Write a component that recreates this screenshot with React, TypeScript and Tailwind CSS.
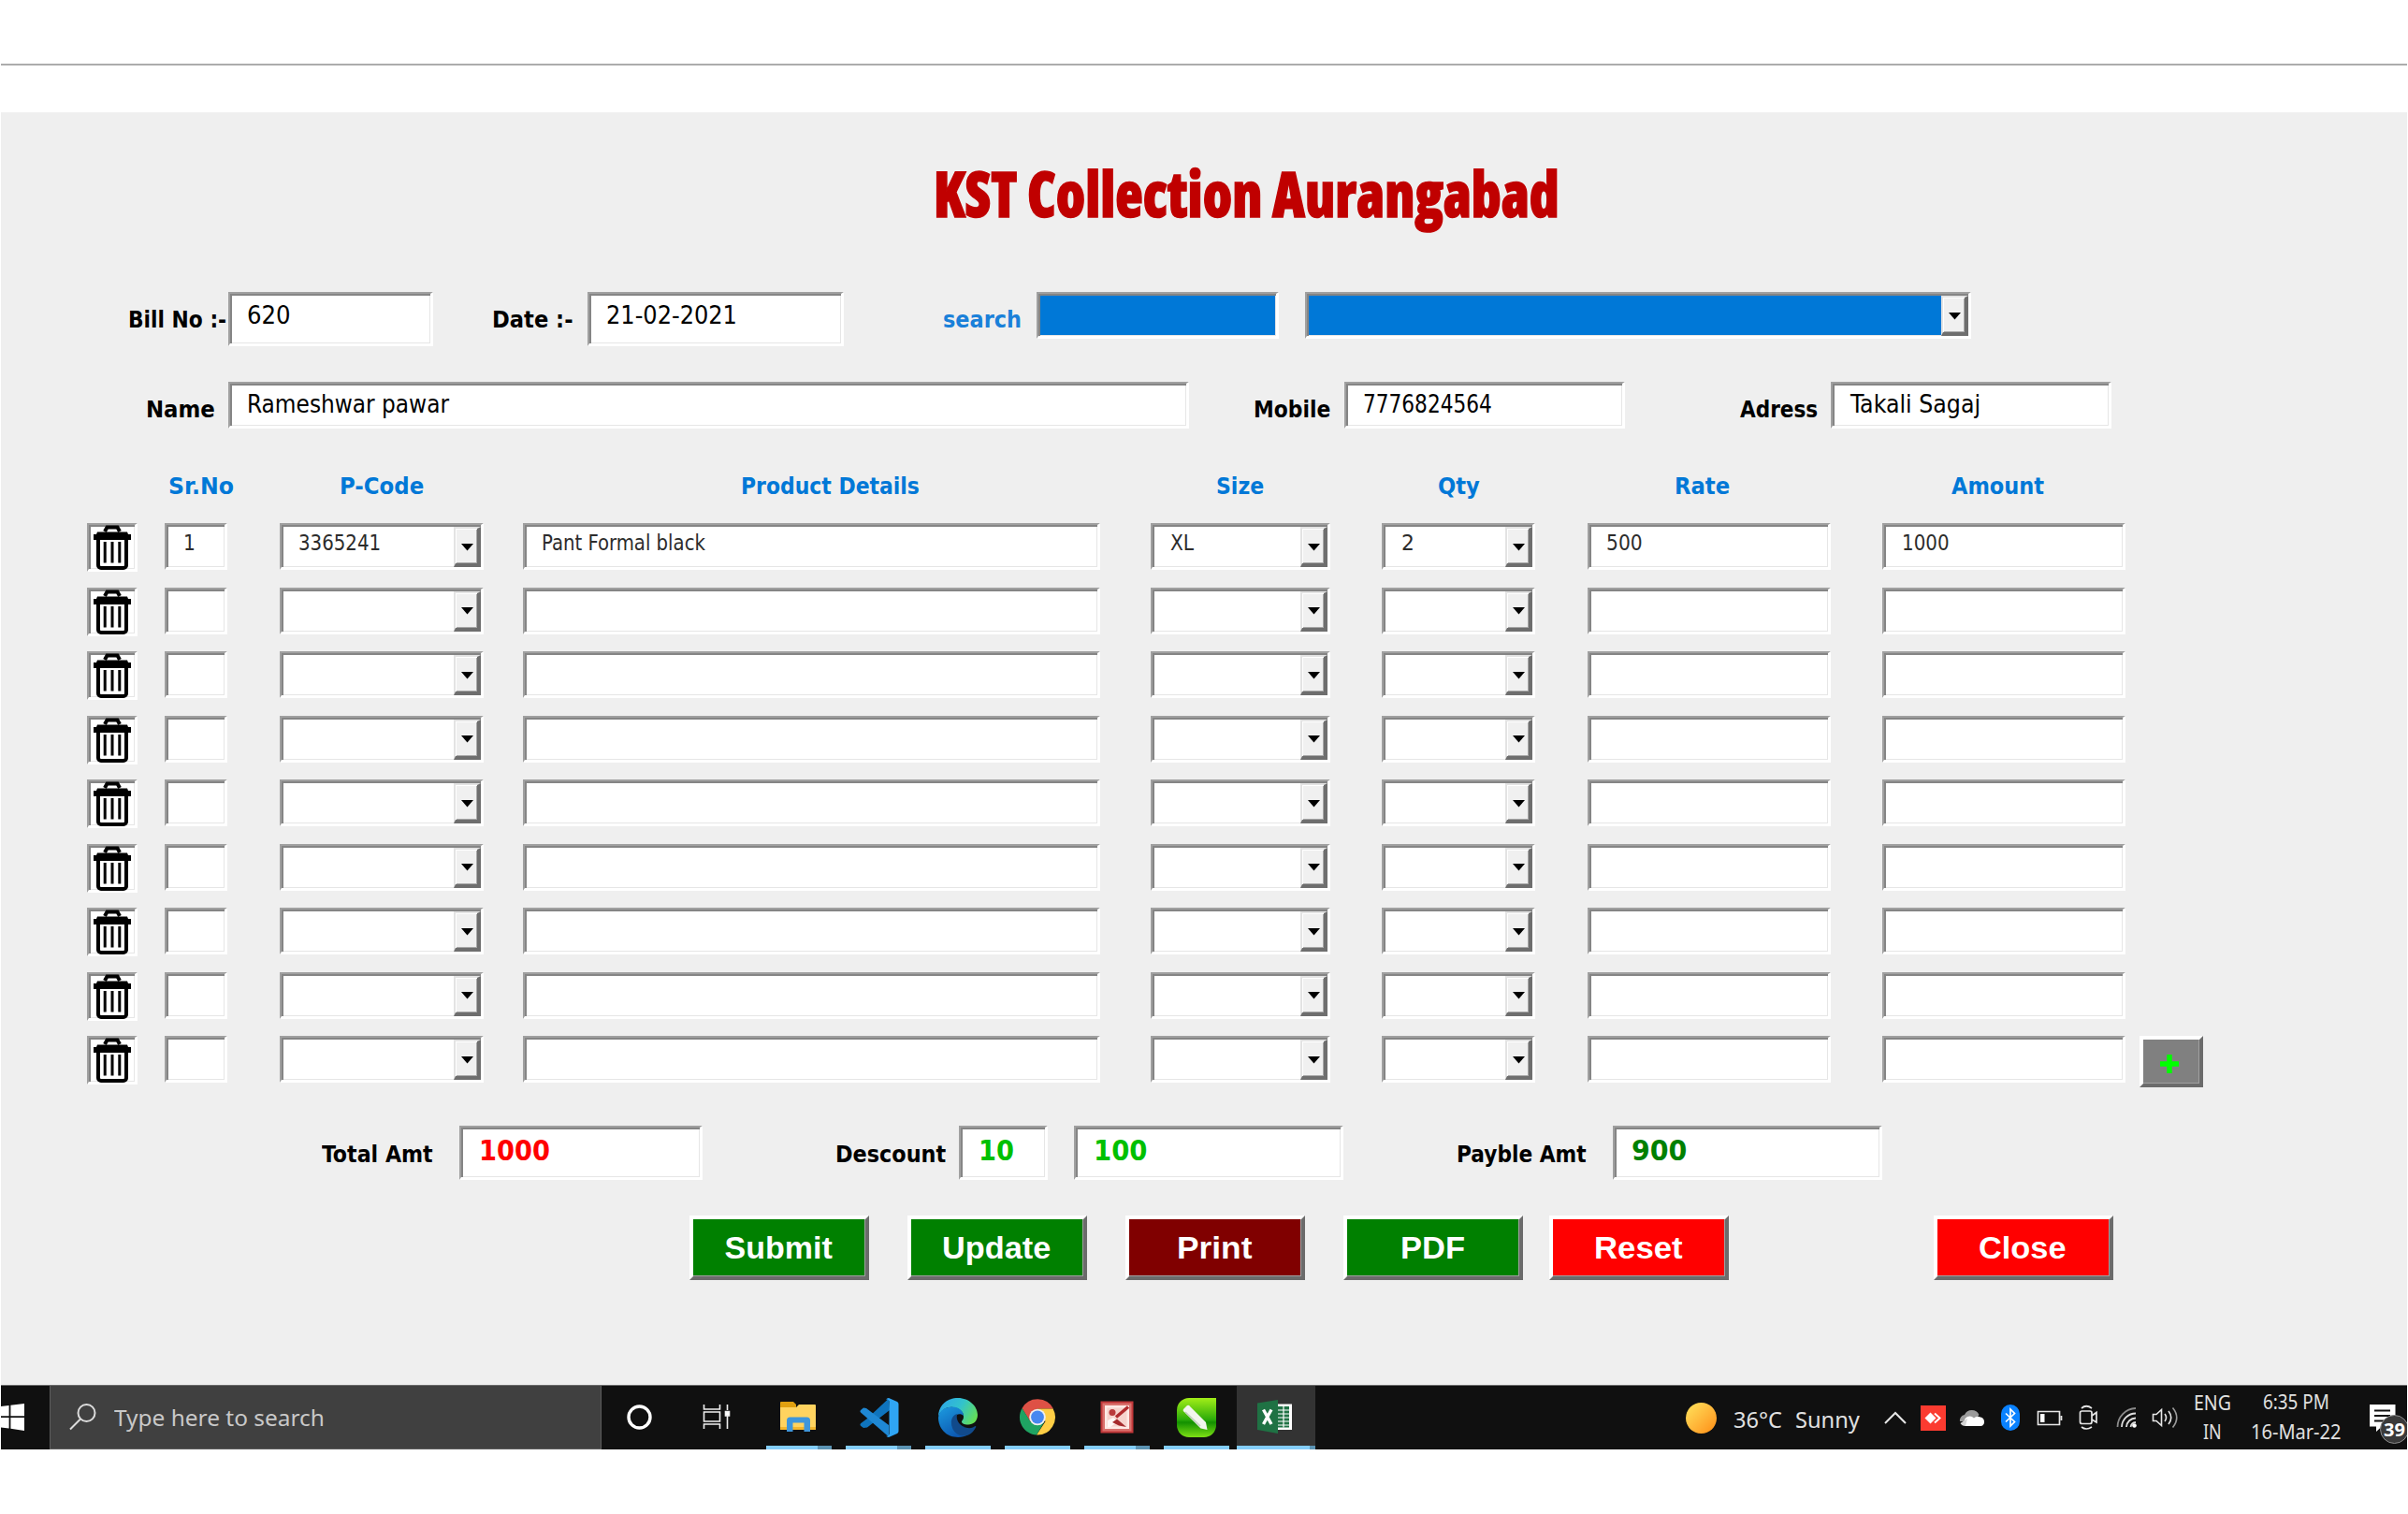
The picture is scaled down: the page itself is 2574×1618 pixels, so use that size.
import { useLayoutEffect, useRef, useState, type ReactNode } from "react";

/** Single line of text stretched horizontally to fill the width of its box. */
function Fit({ className, children }: { className: string; children: string }) {
  const box = useRef<HTMLDivElement>(null);
  const text = useRef<HTMLSpanElement>(null);
  const [scale, setScale] = useState(1);
  useLayoutEffect(() => {
    if (box.current && text.current) {
      setScale(box.current.clientWidth / text.current.offsetWidth);
    }
  }, [children]);
  return (
    <div ref={box} className={`shrink-0 whitespace-nowrap ${className}`}>
      <span ref={text} className="inline-block origin-left" style={{ transform: `scaleX(${scale})` }}>
        {children}
      </span>
    </div>
  );
}

const sunken =
  "shrink-0 border-t-2 border-l-2 border-r-[3px] border-b-[3px] border-t-[#a0a0a0] border-l-[#a0a0a0] border-r-white border-b-white shadow-[inset_2px_2px_0_#858585,inset_-1px_-1px_0_#e6e6e6]";

function Field({ className, children }: { className: string; children?: ReactNode }) {
  return <div className={`${sunken} ${className}`}>{children}</div>;
}

function DropButton() {
  return (
    <div className="flex w-[29px] shrink-0 items-center justify-center border-t-2 border-l-2 border-r-4 border-b-4 border-t-[#e3e3e3] border-l-[#e3e3e3] border-r-[#6e6e6e] border-b-[#6e6e6e] bg-[#f0f0f0] shadow-[inset_1px_1px_0_#fff,inset_-1px_-1px_0_#a8a8a8]">
      <svg viewBox="0 0 13 8" className="mt-0.5 ml-0.5 h-2 w-[13px]">
        <path d="M0 0h13L6.5 7.5z" fill="#000" />
      </svg>
    </div>
  );
}

function Combo({ className, children }: { className: string; children?: ReactNode }) {
  return (
    <div className={`${sunken} flex pt-0.5 ${className}`}>
      <div className="flex-1">{children}</div>
      <DropButton />
    </div>
  );
}

function TrashIcon() {
  return (
    <svg viewBox="0 0 40 48" className="h-12 w-10">
      <path d="M12 7l2.5-4.500h11L28 7" fill="none" stroke="#000" strokeWidth="4" />
      <path d="M4 7.5h32l1 2.500h3v6H0v-6h3z" fill="#000" />
      <path d="M5 14v29a3 3 0 0 0 3 3h24a3 3 0 0 0 3-3V14" fill="none" stroke="#000" strokeWidth="4" />
      <path d="M12.2 18v22.500M20 18v22.500M27.8 18v22.500" stroke="#000" strokeWidth="3" />
    </svg>
  );
}

const label = "text-[24px] font-bold text-black";
const heading = "text-[24px] font-bold leading-[33px] text-[#0078d7]";
const cell = "text-[22.5px] leading-[38px] text-[#2c2c2c]";
const columns = "grid grid-cols-[83px_123px_260px_671px_247px_220px_315px_275px_68px]";

type Line = { no: ReactNode; code: ReactNode; product: ReactNode; size: ReactNode; qty: ReactNode; rate: ReactNode; amount: ReactNode };

const firstLine: Line = {
  no: <Fit className={`ml-[18px] w-[13px] ${cell}`}>1</Fit>,
  code: <Fit className={`-mt-0.5 ml-[18px] w-[88px] ${cell}`}>3365241</Fit>,
  product: <Fit className={`ml-[18px] w-[175px] ${cell}`}>Pant Formal black</Fit>,
  size: <Fit className={`-mt-0.5 ml-[19px] w-[25px] ${cell}`}>XL</Fit>,
  qty: <Fit className={`-mt-0.5 ml-[19px] w-[14px] ${cell}`}>2</Fit>,
  rate: <Fit className={`ml-[18px] w-[39px] ${cell}`}>500</Fit>,
  amount: <Fit className={`ml-[19px] w-[51px] ${cell}`}>1000</Fit>,
};

function LineRow({ line, last }: { line?: Line; last: boolean }) {
  return (
    <div className={`${columns} h-[68.54px] pl-[92px]`}>
      <Field className="h-[52px] w-[54px] bg-white pl-[5px]">
        <TrashIcon />
      </Field>
      <Field className="h-[50px] w-[67px] bg-white">{line?.no}</Field>
      <Combo className="h-[50px] w-[218px] bg-white">{line?.code}</Combo>
      <Field className="h-[50px] w-[617px] bg-white">{line?.product}</Field>
      <Combo className="h-[50px] w-[192px] bg-white">{line?.size}</Combo>
      <Combo className="h-[50px] w-[164px] bg-white">{line?.qty}</Combo>
      <Field className="h-[50px] w-[260px] bg-white">{line?.rate}</Field>
      <Field className="h-[50px] w-[260px] bg-white">{line?.amount}</Field>
      {last && (
        <div className="flex h-[55px] w-[68px] items-center justify-center border-4 border-t-white border-r-[#6b6b6b] border-b-[#6b6b6b] border-l-white bg-[#808080] shadow-[inset_-1px_-1px_0_#a0a0a0]">
          <svg viewBox="0 0 20 20" className="mt-1 mr-1 size-5">
            <path d="M10 0v20M0 10h20" stroke="#00ff00" strokeWidth="5.5" />
          </svg>
        </div>
      )}
    </div>
  );
}

function ActionButton({ className, text, children }: { className: string; text: string; children: string }) {
  return (
    <div
      className={`flex h-[69px] w-[192px] shrink-0 items-center justify-center border-4 border-t-white border-r-[#6b6b6b] border-b-[#6b6b6b] border-l-white pr-0.5 font-['Liberation_Sans',sans-serif] text-[34px] font-bold text-white shadow-[inset_-1px_-1px_0_#a0a0a0] ${className}`}
    >
      <Fit className={text}>{children}</Fit>
    </div>
  );
}

function TaskItem({ split, children }: { split?: boolean; children: ReactNode }) {
  return (
    <div className="flex w-[70px] shrink-0 flex-col">
      <div className="flex flex-1 justify-center pt-[13px]">{children}</div>
      <div className="flex h-1">
        <div className="flex-1 bg-[#83cdf9]" />
        {split && <div className="w-[15px] bg-[#5c94b4]" />}
      </div>
    </div>
  );
}

function Taskbar() {
  return (
    <div className="flex h-[69px] overflow-hidden border-t border-[#6a6a6a] bg-[#101010] font-['Noto_Sans',sans-serif] text-[#e0e0e0]">
      <svg viewBox="0 0 52 68" className="w-[52px] shrink-0">
        <path d="M0 22l8.600-1v11.200H0zM10.400 20.700L25 19v13.200H10.400zM0 34h8.600v11.500L0 44.500zM10.400 34H25v14L10.400 45.800z" fill="#fff" />
      </svg>
      <div className="flex w-[590px] shrink-0 items-center border-x border-b border-[#5c5c5c] bg-[#404040]">
        <svg viewBox="0 0 30 30" className="ml-5 h-[30px] w-[30px] -translate-y-px" fill="none" stroke="#dcdcdc" strokeWidth="2">
          <circle cx="18.5" cy="11" r="9" />
          <path d="M12 17.5L1 28.5" />
        </svg>
        <Fit className="ml-[18px] w-[225px] text-[24px] text-[#c8c8c8]">Type here to search</Fit>
      </div>
      <svg viewBox="0 0 30 68" className="ml-[26px] w-[30px] shrink-0">
        <circle cx="14.5" cy="33.5" r="11.500" fill="none" stroke="#fff" strokeWidth="3.400" />
      </svg>
      <svg viewBox="0 0 30 68" className="ml-[52px] w-[30px] shrink-0" fill="none" stroke="#f0f0f0" strokeWidth="1.600">
        <path d="M1.500 20v5h17v-5M1.500 46v-5h17v5M1.500 28h17v10h-17zM26.500 20v6M26.500 32v14" />
        <path d="M24.500 27.500h4V32h-4z" fill="#fff" />
      </svg>

      <div className="ml-[38px] flex gap-[15px]">
        <TaskItem split>
          <svg viewBox="0 0 40 42" className="mr-[3px] h-[42px] w-10">
            <path d="M1 5a1 1 0 0 1 1-1h13l3 3v6H1z" fill="#e0a010" />
            <path d="M1 10h17l3-3h17a1 1 0 0 1 1 1v26H1z" fill="#ffd35f" />
            <path d="M1 31h38v3H1z" fill="#f3b62c" />
            <path d="M8 36V24a3.500 3.500 0 0 1 3.500-3.500h18A3.500 3.500 0 0 1 33 24v12h-6.500v-9.500h-12V36z" fill="#3e96db" />
          </svg>
        </TaskItem>
        <TaskItem split>
          <svg viewBox="0 0 42 42" className="ml-px size-[42px]">
            <path d="M31 .5L8 22 1.300 27a2 2 0 0 0 0 3L4 32l4-.5L32 13z" fill="#0f74bd" />
            <path d="M4 10.500L1.300 12.700a2 2 0 0 0 0 3L31 41.500V29L7 11z" fill="#1f88d4" />
            <path d="M31 0l9 4a3 3 0 0 1 1.500 2.500v29A3 3 0 0 1 40 38l-9 4q-2-.2-3-1.500 3 1 3.500-2V3.500Q31 1 28 1.500 29 0 31 0z" fill="#2fa5f4" />
          </svg>
        </TaskItem>
        <TaskItem>
          <svg viewBox="0 0 42 42" className="size-[42px]">
            <defs>
              <linearGradient id="edgeTop" x1="0" y1="0.3" x2="1" y2="0.7">
                <stop offset="0" stopColor="#2da8e8" />
                <stop offset="0.5" stopColor="#33c3cb" />
                <stop offset="1" stopColor="#66e052" />
              </linearGradient>
              <linearGradient id="edgeLow" x1="0" y1="0" x2="0.6" y2="1">
                <stop offset="0" stopColor="#1c9be0" />
                <stop offset="1" stopColor="#0c57b0" />
              </linearGradient>
            </defs>
            <path d="M0 20C0 8 9 0 21 0s21 9 21 18c0 7-5 10.500-10 10.500-5 0-7-1.500-7-3 0-1.500 2-2 2-5.500C27 14 22 11 16 10 8 9 2 14 0 20z" fill="url(#edgeTop)" />
            <path d="M0 21C1 13 8 9.500 15 9.500c7 0 12 5 12 9.500-3-3-9-2-10 3-1.500 8 5 19 15 17-3 2-7 3-11 3C9 42 0 33 0 21z" fill="url(#edgeLow)" />
            <path d="M14 24c1-4 3-6.500 6.500-7-2 3-.5 13 10.500 15 4 .7 7-1 8.500-2 1 0 1 .5.500 1.500C37 37 33 40 28 40.500 19 41 13 33 14 24z" fill="#114a8b" />
          </svg>
        </TaskItem>
        <TaskItem>
          <svg viewBox="0 0 42 42" className="size-[42px]">
            <path d="M4.500 11A19 19 0 0 1 38 11.500H21L13 25z" fill="#de5145" />
            <path d="M37.600 11.500A19 19 0 0 1 20 39.500L29.500 25 21 11.500z" fill="#ffce45" />
            <path d="M4.500 11A19 19 0 0 0 20 39.500L28 26H14z" fill="#1fa362" />
            <circle cx="21" cy="20.500" r="8.800" fill="#eee" />
            <circle cx="21" cy="20.500" r="6.900" fill="#4687f0" />
          </svg>
        </TaskItem>
        <TaskItem split>
          <svg viewBox="0 0 42 42" className="size-[42px]">
            <path d="M3.500 3.500h35v34h-35z" fill="#c2383a" />
            <path d="M5.500 5.500h31v30h-31z" fill="#d9716d" />
            <path d="M8 8h26v25H8z" fill="#fdeae6" />
            <path d="M10.500 10.500h21v20h-21z" fill="#f6d3cd" />
            <path d="M11 24l6-3 5 4-8 6h-3z" fill="#fff8f6" />
            <path d="M33 9.500L20 20.500" stroke="#b02a2d" strokeWidth="3.500" />
            <circle cx="16" cy="15.500" r="3.500" fill="#b9393a" />
            <path d="M16 26l5-3.500 10 8.500-8-1.500z" fill="#a52a2c" />
          </svg>
        </TaskItem>
        <TaskItem>
          <svg viewBox="0 0 42 42" className="size-[42px]">
            <defs>
              <linearGradient id="penTile" x1="0" y1="0" x2="0" y2="1">
                <stop offset="0" stopColor="#a2ee18" />
                <stop offset="0.55" stopColor="#2cab0a" />
                <stop offset="0.62" stopColor="#129000" />
                <stop offset="1" stopColor="#7ee015" />
              </linearGradient>
            </defs>
            <path d="M0 13A13 13 0 0 1 13 0h29v29a13 13 0 0 1-13 13H13A13 13 0 0 1 0 29z" fill="url(#penTile)" />
            <path d="M7 12l4-4q2-1 3 1l17 17 1.500 8-7-1.500L8 15q-2-1-1-3z" fill="#f2f5ee" />
            <path d="M9 15l16 15" stroke="#c4cec0" strokeWidth="1.5" />
          </svg>
        </TaskItem>
      </div>

      <div className="ml-2 flex w-[84px] shrink-0 flex-col bg-[#333]">
        <div className="flex flex-1 pl-5">
          <svg viewBox="0 0 42 64" className="w-[42px]">
            <path d="M22 19.500h17V47H22z" fill="#fff" />
            <path d="M24 22h12v22.500H24z" fill="#217346" />
            <path d="M24 26h12M24 30h12M24 34h12M24 38h12M24 42h12M30 22v22.500" stroke="#fff" strokeWidth="1.200" />
            <path d="M2 18.500L24 15v36L2 47z" fill="#1f7244" />
            <path d="M8.500 25.500L17 41M17 25.500L8.500 41" stroke="#fff" strokeWidth="3.400" />
          </svg>
        </div>
        <div className="flex h-1">
          <div className="flex-1 bg-[#83cdf9]" />
          <div className="w-1.5 bg-[#5c94b4]" />
        </div>
      </div>

      <div className="ml-[396px] flex shrink-0 items-center">
        <div className="size-[33px] rounded-full bg-linear-to-br from-[#ffe45c] to-[#ff8c0a]" />
        <Fit className="ml-[18px] w-[52px] pt-1 text-[24px]">36°C</Fit>
        <Fit className="ml-[14px] w-[69px] pt-1 text-[24px]">Sunny</Fit>
      </div>
      <div className="ml-[26px] flex shrink-0 items-center">
        <svg viewBox="0 0 24 14" className="h-3.5 w-6">
          <path d="M1 13L12 2l11 11" fill="none" stroke="#e6e6e6" strokeWidth="2" />
        </svg>
        <svg viewBox="0 0 27 27" className="ml-[15px] size-[27px]">
          <path d="M0 0h27v27H0z" fill="#fb3b30" />
          <path d="M10.500 7.500l6 6-6 6-6-6z" fill="#fff" />
          <path d="M15 8.500l5.500 5-5.500 5" fill="none" stroke="#fff" strokeWidth="2" />
        </svg>
        <svg viewBox="0 0 28 20" className="ml-3.5 h-5 w-7">
          <path d="M1 14a6 6 0 0 1 5-7 8.500 8.500 0 0 1 15.500 0L16 14z" fill="#9b9b9b" />
          <path d="M7 19a6.500 6.500 0 0 1 2-10q4-1.500 7 1.500 3-3 7-1a5 5 0 0 1 1 9.500z" fill="#fff" />
          <path d="M7 19a6 6 0 0 1-5.500-3L9 11z" fill="#d6d6d6" />
        </svg>
        <svg viewBox="0 0 20 28" className="ml-[17px] h-7 w-5">
          <rect width="20" height="28" rx="10" fill="#0a82ff" />
          <path d="M5 9.500l9.500 9L10 23V5l4.500 4.500-9.500 9" fill="none" stroke="#fff" strokeWidth="1.700" />
        </svg>
        <svg viewBox="0 0 28 18" className="mt-0.5 ml-[18px] h-[18px] w-7">
          <path d="M1.500 1.500h23v14h-23zM26.500 6v5" fill="none" stroke="#e6e6e6" strokeWidth="1.700" />
          <path d="M4 4h4.500v9H4z" fill="#fff" />
        </svg>
        <svg viewBox="0 0 22 28" className="ml-[17px] h-7 w-[22px]" fill="none" stroke="#e6e6e6" strokeWidth="1.700">
          <rect x="1.500" y="7" width="12.500" height="13.500" rx="2" />
          <path d="M14 12l5-3.500v10.500L14 16M3 4q5-4.500 11 0M3 24q5 4 11 0" />
        </svg>
        <svg viewBox="0 0 23 24" className="ml-[18px] h-6 w-[23px]" fill="none">
          <path d="M1.500 22A20 20 0 0 1 21 2" stroke="#8a8a8a" strokeWidth="1.800" />
          <path d="M6 22A15 15 0 0 1 21 7.500M11 22a10 10 0 0 1 10-9.500M15.500 22a6 6 0 0 1 5.500-5" stroke="#dedede" strokeWidth="1.800" />
          <circle cx="19.500" cy="20.500" r="2.300" fill="#fff" />
        </svg>
        <svg viewBox="0 0 30 24" className="ml-[15px] h-6 w-[30px]" fill="none" stroke="#e6e6e6" strokeWidth="1.600">
          <path d="M1.500 8.500v7h3.500l5.500 5V3.500L5 8.500z" />
          <path d="M14 8q3 4 0 8M18 5q5.500 7 0 14" />
          <path d="M22.500 1.500q8.500 10.500 0 21" stroke="#9a9a9a" />
        </svg>
      </div>
      <div className="ml-[15px] flex shrink-0 flex-col items-center pt-0.5 text-[21.5px] leading-[31px]">
        <Fit className="w-10">ENG</Fit>
        <Fit className="w-5">IN</Fit>
      </div>
      <div className="ml-[21px] flex shrink-0 flex-col items-center pt-px text-[21.5px] leading-[31.5px]">
        <Fit className="w-[71px]">6:35 PM</Fit>
        <Fit className="w-[96px]">16-Mar-22</Fit>
      </div>
      <div className="relative ml-[31px] w-[40px] shrink-0 pt-5">
        <svg viewBox="0 0 28 30" className="h-[30px] w-7">
          <path d="M0 0h27.500v23.500H13L7 29v-5.500H0z" fill="#fff" />
          <path d="M5 6.500h17M5 12h17M5 17.500h12" stroke="#101010" strokeWidth="2" />
        </svg>
        <div className="absolute top-[31px] left-[11px] flex size-[31px] items-center justify-center rounded-full border-[1.5px] border-[#8b8b8b] bg-[#3a3a3a] text-[20px] font-bold text-white">
          <Fit className="w-[23px] leading-none">39</Fit>
        </div>
      </div>
    </div>
  );
}

export default function App() {
  return (
    <div className="flex h-[1618px] w-[2574px] flex-col overflow-hidden bg-white px-px font-['DejaVu_Sans_Condensed','DejaVu_Sans',sans-serif] text-black">
      <div className="mb-[50px] h-[70px] shrink-0 border-b-2 border-[#acacac]" />

      <main className="h-[1360px] shrink-0 bg-[#efefef]">
        <h1 className="flex h-48 pl-[997px] font-['Open_Sans','Noto_Sans',sans-serif] text-[67px] leading-[173px] font-extrabold text-[#c00000] [font-stretch:75%] [-webkit-text-stroke:1.5px_#c00000]">
          <Fit className="w-[669px]">KST Collection Aurangabad</Fit>
        </h1>

        <div className="flex h-24 items-start pl-[136px]">
          <Fit className={`w-[105px] leading-[60px] ${label}`}>Bill No :-</Fit>
          <Field className="ml-0.5 h-[58px] w-[219px] bg-white">
            <Fit className="ml-[18px] w-[47px] text-[26px] leading-[46px]">620</Fit>
          </Field>
          <Fit className={`ml-[63px] w-[87px] leading-[60px] ${label}`}>Date :-</Fit>
          <Field className="ml-[15px] h-[58px] w-[274px] bg-white">
            <Fit className="ml-[18px] w-[140px] text-[26px] leading-[46px]">21-02-2021</Fit>
          </Field>
          <Fit className="ml-[106px] w-[84px] text-[24px] leading-[60px] font-bold text-[#1a80d9]">search</Fit>
          <Field className="ml-4 h-[50px] w-[259px] bg-[#0078d7]" />
          <Combo className="ml-7 h-[50px] w-[712px] bg-[#0078d7]" />
        </div>

        <div className="flex h-24 items-start pl-[155px]">
          <Fit className={`w-[74px] leading-[61px] ${label}`}>Name</Fit>
          <Field className="ml-3.5 h-[50px] w-[1027px] bg-white">
            <Fit className="ml-[18px] w-[216px] text-[26px] leading-[44px]">Rameshwar pawar</Fit>
          </Field>
          <Fit className={`ml-[69px] w-[82px] leading-[61px] ${label}`}>Mobile</Fit>
          <Field className="ml-[15px] h-[50px] w-[300px] bg-white">
            <Fit className="ml-[18px] w-[138px] text-[26px] leading-[44px]">7776824564</Fit>
          </Field>
          <Fit className={`ml-[123px] w-[83px] leading-[61px] ${label}`}>Adress</Fit>
          <Field className="ml-3.5 h-[50px] w-[300px] bg-white">
            <Fit className="ml-[19px] w-[139px] text-[26px] leading-[44px]">Takali Sagaj</Fit>
          </Field>
        </div>

        <div className="flex h-[55px] pl-[179px]">
          <Fit className={`w-[70px] ${heading}`}>Sr.No</Fit>
          <Fit className={`ml-[113px] w-[90px] ${heading}`}>P-Code</Fit>
          <Fit className={`ml-[339px] w-[191px] ${heading}`}>Product Details</Fit>
          <Fit className={`ml-[317px] w-[51px] ${heading}`}>Size</Fit>
          <Fit className={`ml-[186px] w-[45px] ${heading}`}>Qty</Fit>
          <Fit className={`ml-[208px] w-[59px] ${heading}`}>Rate</Fit>
          <Fit className={`ml-[237px] w-[99px] ${heading}`}>Amount</Fit>
        </div>

        {Array.from({ length: 9 }, (_, i) => (
          <LineRow key={i} line={i === 0 ? firstLine : undefined} last={i === 8} />
        ))}

        <div className="mt-[27px] flex h-24 items-start pl-[343px]">
          <Fit className={`w-[119px] leading-[62px] ${label}`}>Total Amt</Fit>
          <Field className="ml-7 h-[58px] w-[260px] bg-white">
            <Fit className="ml-[19px] w-[76px] text-[29.5px] leading-[50px] font-bold text-[#ff0000]">1000</Fit>
          </Field>
          <Fit className={`ml-[142px] w-[118px] leading-[62px] ${label}`}>Descount</Fit>
          <Field className="ml-3.5 h-[58px] w-[95px] bg-white">
            <Fit className="ml-[19px] w-[38px] text-[29.5px] leading-[50px] font-bold text-[#00c000]">10</Fit>
          </Field>
          <Field className="ml-7 h-[58px] w-[288px] bg-white">
            <Fit className="ml-[19px] w-[57px] text-[29.5px] leading-[50px] font-bold text-[#00c000]">100</Fit>
          </Field>
          <Fit className={`ml-[121px] w-[139px] leading-[62px] ${label}`}>Payble Amt</Fit>
          <Field className="ml-7 h-[58px] w-[288px] bg-white">
            <Fit className="ml-[18px] w-[59px] text-[29.5px] leading-[50px] font-bold text-[#008000]">900</Fit>
          </Field>
        </div>

        <div className="flex pl-[736px]">
          <ActionButton className="bg-[#008000]" text="w-[115px]">Submit</ActionButton>
          <ActionButton className="ml-[41px] bg-[#008000]" text="w-[116px]">Update</ActionButton>
          <ActionButton className="ml-[41px] bg-[#800000]" text="w-[80px]">Print</ActionButton>
          <ActionButton className="ml-[41px] bg-[#008000]" text="w-[69px]">PDF</ActionButton>
          <ActionButton className="ml-7 bg-[#ff0000]" text="w-[95px]">Reset</ActionButton>
          <ActionButton className="ml-[219px] bg-[#ff0000]" text="w-[94px]">Close</ActionButton>
        </div>
      </main>

      <Taskbar />
    </div>
  );
}
